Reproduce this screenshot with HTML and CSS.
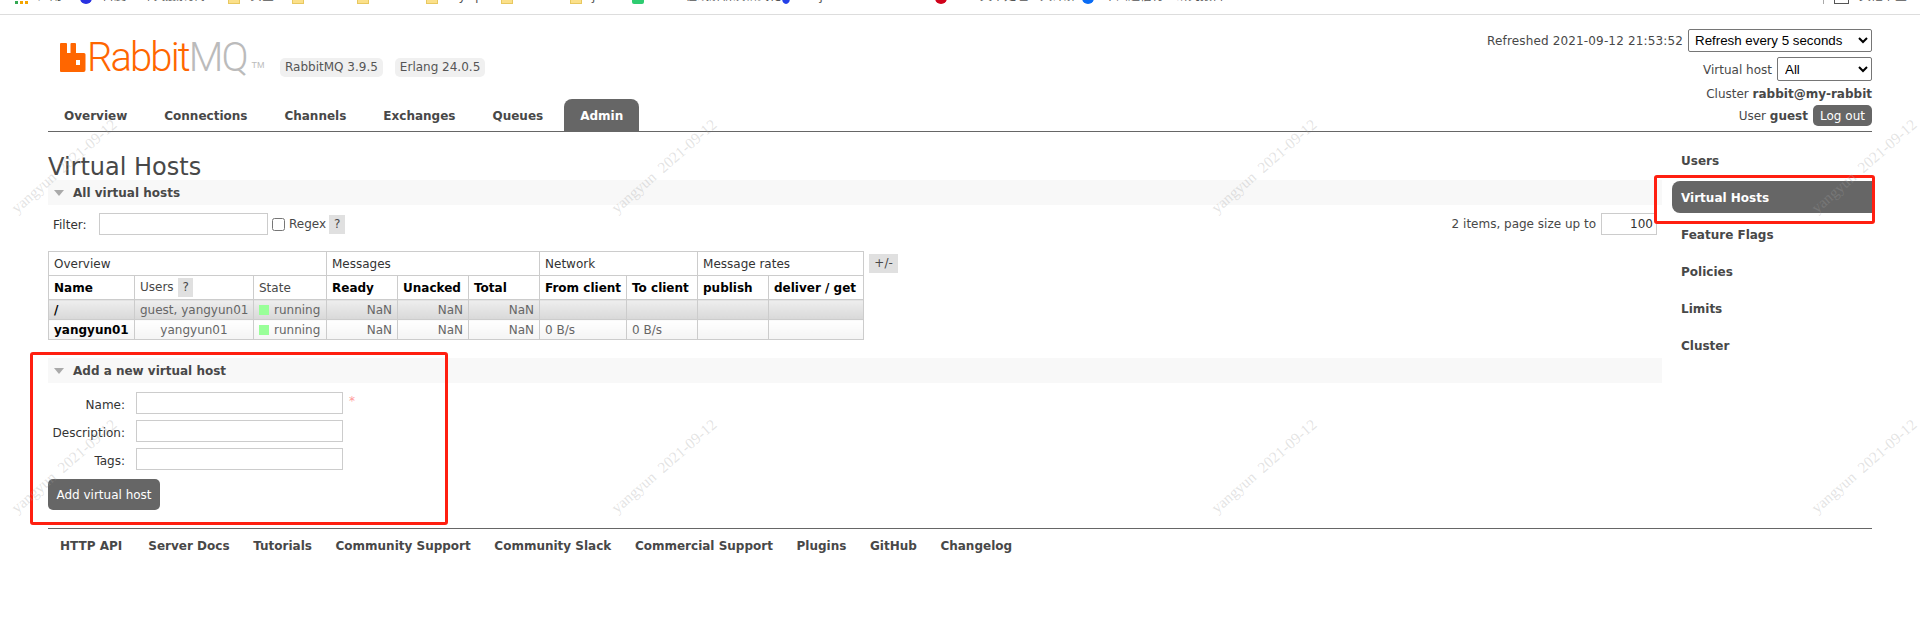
FILE: index.html
```html
<!DOCTYPE html>
<html lang="en">
<head>
    <meta charset="UTF-8">
    <title>RabbitMQ Management</title>
    <link rel="stylesheet" href="styles.css">
</head>
<body>
    <!-- browser bookmarks bar, cut off by the top of the shot -->
    <div class="bookmarks">
        <div class="bm bm-apps"><span class="ico-apps"><i></i><i></i><i></i></span><span>应用</span></div>
        <div class="bm bm-baidu"><span class="ico ico-round ico-blue"></span><span>百度</span></div>
        <div class="bm bm-zh"><span>中文搜索引擎</span></div>
        <div class="bm"><span class="ico ico-folder"></span><span>安全</span></div>
        <div class="bm"><span class="ico ico-folder"></span><span>idea</span></div>
        <div class="bm"><span class="ico ico-folder"></span><span>tools</span></div>
        <div class="bm"><span class="ico ico-folder"></span><span>mysql</span></div>
        <div class="bm"><span class="ico ico-folder"></span><span>redis</span></div>
        <div class="bm"><span class="ico ico-folder"></span><span>java</span></div>
        <div class="bm bm-wide"><span class="ico ico-green"></span><span>JSON在线解析及格式化</span></div>
        <div class="bm bm-wide"><span class="ico ico-small-blue"></span><span>Projects · Dashboard</span></div>
        <div class="bm bm-wide"><span class="ico ico-round ico-red"></span><span>awk文本处理工具详解</span></div>
        <div class="bm bm-wide"><span class="ico ico-round ico-sky"></span><span>中国通信行业研究报告</span></div>
        <div class="bm bm-other"><span class="ico-sep"></span><span class="ico-box"></span><span>其他书签</span></div>
    </div>

    <div class="header">
        <div class="header-left">
            <div class="logo-row">
                <div class="logo">
                    <svg class="logo-mark" viewBox="0 0 26 29" width="26" height="29">
                        <path fill="#f60" fill-rule="evenodd" d="M0 1q0-1 1-1h5q1 0 1 1v9h3.500V1q0-1 1-1h3.500q1 0 1 1v9h8q1.500 0 1.500 1.500V27q0 2-2 2H1q-1 0-1-1zM16 17h4v5h-4z"/>
                    </svg>
                    <span class="logo-text"><span class="logo-rabbit">Rabbit</span><span class="logo-mq">MQ</span></span>
                    <span class="logo-tm">TM</span>
                </div>
                <span class="badge badge-first">RabbitMQ 3.9.5</span>
                <span class="badge">Erlang 24.0.5</span>
            </div>
            <ul class="tabs">
                <li>Overview</li>
                <li>Connections</li>
                <li>Channels</li>
                <li>Exchanges</li>
                <li>Queues</li>
                <li class="selected">Admin</li>
            </ul>
        </div>
        <div class="header-right">
            <div class="status-row status-refresh">
                <span class="refreshed">Refreshed 2021-09-12 21:53:52</span>
                <select class="select-refresh"><option>Refresh every 5 seconds</option></select>
            </div>
            <div class="status-row status-vhost">
                <span>Virtual host</span>
                <select class="select-vhost"><option>All</option></select>
            </div>
            <div class="status-row status-cluster"><span>Cluster <b>rabbit@my-rabbit</b></span></div>
            <div class="status-row status-user">
                <span>User <b>guest</b></span>
                <button class="logout">Log out</button>
            </div>
        </div>
    </div>

    <div class="page">
        <div class="main">
            <h1>Virtual Hosts</h1>
            <h2 class="section-title"><span class="triangle"></span>All virtual hosts</h2>
            <div class="filter-row">
                <label class="filter-label">Filter:</label>
                <input type="text" class="filter-input">
                <input type="checkbox" class="regex-check">
                <span class="regex-label">Regex</span>
                <span class="help">?</span>
                <span class="pager">2 items, page size up to</span>
                <input type="text" class="page-size" value="100">
            </div>
            <div class="table-row">
                <table class="list">
                    <colgroup>
                        <col class="c86"><col class="c119"><col class="c73">
                        <col class="c71"><col class="c71"><col class="c71">
                        <col class="c87"><col class="c71"><col class="c71"><col class="c95">
                    </colgroup>
                    <thead>
                        <tr class="group-head">
                            <th colspan="3">Overview</th>
                            <th colspan="3">Messages</th>
                            <th colspan="2">Network</th>
                            <th colspan="2">Message rates</th>
                        </tr>
                        <tr class="col-head">
                            <th>Name</th>
                            <th class="plain">Users <span class="help help-small">?</span></th>
                            <th class="plain">State</th>
                            <th>Ready</th>
                            <th>Unacked</th>
                            <th>Total</th>
                            <th>From client</th>
                            <th>To client</th>
                            <th>publish</th>
                            <th>deliver / get</th>
                        </tr>
                    </thead>
                    <tbody>
                        <tr class="alt1">
                            <td class="name">/</td>
                            <td class="center">guest, yangyun01</td>
                            <td><span class="state-dot"></span>running</td>
                            <td class="num">NaN</td><td class="num">NaN</td><td class="num">NaN</td>
                            <td></td><td></td><td></td><td></td>
                        </tr>
                        <tr class="alt2">
                            <td class="name">yangyun01</td>
                            <td class="center">yangyun01</td>
                            <td><span class="state-dot"></span>running</td>
                            <td class="num">NaN</td><td class="num">NaN</td><td class="num">NaN</td>
                            <td>0 B/s</td><td>0 B/s</td><td></td><td></td>
                        </tr>
                    </tbody>
                </table>
                <span class="help help-columns">+/-</span>
            </div>

            <h2 class="section-title section-add"><span class="triangle"></span>Add a new virtual host</h2>
            <form class="add-form">
                <div class="form-row">
                    <label>Name:</label><input type="text"><span class="mand">*</span>
                </div>
                <div class="form-row">
                    <label>Description:</label><input type="text">
                </div>
                <div class="form-row">
                    <label>Tags:</label><input type="text">
                </div>
                <button type="button" class="add-btn">Add virtual host</button>
            </form>
        </div>
        <ul class="side-nav">
            <li>Users</li>
            <li class="selected">Virtual Hosts</li>
            <li>Feature Flags</li>
            <li>Policies</li>
            <li>Limits</li>
            <li>Cluster</li>
        </ul>
    </div>

    <div class="footer">
        <ul>
            <li>HTTP API</li>
            <li>Server Docs</li>
            <li>Tutorials</li>
            <li>Community Support</li>
            <li>Community Slack</li>
            <li>Commercial Support</li>
            <li>Plugins</li>
            <li>GitHub</li>
            <li>Changelog</li>
        </ul>
    </div>

    <!-- hand drawn red annotations -->
    <div class="mark mark-nav"></div>
    <div class="mark mark-form"></div>

    <!-- watermark tiles -->
    <div class="watermarks">
        <div><span>yangyun&nbsp; 2021-09-12</span></div>
        <div><span>yangyun&nbsp; 2021-09-12</span></div>
        <div><span>yangyun&nbsp; 2021-09-12</span></div>
        <div><span>yangyun&nbsp; 2021-09-12</span></div>
        <div><span>yangyun&nbsp; 2021-09-12</span></div>
        <div><span>yangyun&nbsp; 2021-09-12</span></div>
        <div><span>yangyun&nbsp; 2021-09-12</span></div>
        <div><span>yangyun&nbsp; 2021-09-12</span></div>
    </div>
</body>
</html>
```

FILE: styles.css
```css
* {
    box-sizing: border-box;
}

html, body {
    height: 631px;
    overflow: hidden;
}

body {
    margin: 0;
    position: relative;
    background-color: #fff;
    color: #484848;
    font-family: "DejaVu Sans", Verdana, sans-serif;
    font-size: 12px;
}

ul {
    list-style: none;
    margin: 0;
    padding: 0;
}

/* bookmarks bar */
.bookmarks {
    height: 15px;
    border-bottom: 1px solid #ddd;
    overflow: hidden;
    display: flex;
    align-items: flex-end;
    padding: 0 0 10px 15px;
    font-family: "Noto Sans CJK SC", sans-serif;
    font-size: 12px;
    color: #555;
}

.bm {
    flex: none;
    width: 65px;
    height: 18px;
    line-height: 18px;
    display: flex;
    align-items: flex-end;
    gap: 10px;
    white-space: nowrap;
}

.bm span {
    flex: none;
}

.bm:nth-child(4) { width: 64px; }
.bm:nth-child(6) { width: 69px; }
.bm:nth-child(7) { width: 75px; }
.bm:nth-child(8) { width: 69px; }
.bm:nth-child(9) { width: 62px; }

.bm-baidu {
    width: 63px;
}

.bm-zh {
    width: 85px;
    font-size: 11px;
}

.bm.bm-wide {
    width: 150px;
}

.bm.bm-wide:nth-child(11) {
    width: 153px;
}

.bm.bm-wide:nth-child(12) {
    width: 147px;
}

.bm-other {
    margin-left: 591px;
}

.ico {
    width: 12px;
    height: 12px;
}

.ico-round {
    border-radius: 50%;
}

.ico-blue {
    background-color: #2932e1;
}

.ico-red {
    background-color: #d0021b;
}

.ico-sky {
    background-color: #0a6cf5;
}

.ico-green {
    background-color: #2ecc71;
    border-radius: 2px;
}

.ico-small-blue {
    width: 8px;
    background-color: #2440e8;
    border-radius: 50%;
}

.ico-folder {
    background-color: #fbe08a;
    border: 1px solid #e8c860;
}

.ico-apps {
    display: flex;
    gap: 2px;
    width: 13px;
}

.ico-apps i {
    width: 3px;
    height: 3px;
    background-color: #f4a400;
}

.ico-apps i:first-child {
    background-color: #34a853;
}

.ico-sep {
    width: 1px;
    height: 12px;
    background-color: #aaa;
}

.ico-box {
    width: 15px;
    height: 12px;
    border: 1px solid #555;
}

/* header */
.header {
    height: 117px;
    margin: 0 48px;
    border-bottom: 1px solid #666;
    display: flex;
    justify-content: space-between;
}

.header-left {
    display: flex;
    flex-direction: column;
    justify-content: space-between;
    padding-top: 28px;
}

.logo-row {
    display: flex;
    align-items: flex-start;
}

.logo {
    display: flex;
    align-items: flex-start;
    width: 232px;
    padding-left: 12px;
}

.logo-mark {
    flex: none;
}

.logo-text {
    font-family: Roboto, "Liberation Sans", sans-serif;
    font-weight: 300;
    font-size: 40px;
    line-height: 29px;
    letter-spacing: -1.9px;
    margin-left: 1px;
}

.logo-rabbit {
    color: #f60;
}

.logo-mq {
    color: #bbb;
}

.logo-tm {
    font-family: "Liberation Sans", sans-serif;
    font-size: 9px;
    color: #bbb;
    margin: 17px 0 0 5px;
}

.badge {
    height: 19px;
    line-height: 19px;
    margin-top: 15px;
    margin-left: 12px;
    padding: 0 5px;
    background-color: #f0f0f0;
    border-radius: 5px;
    color: #555;
    white-space: nowrap;
}

.badge-first {
    margin-left: 0;
}

.tabs {
    display: flex;
    gap: 5px;
}

.tabs li {
    height: 32px;
    line-height: 34px;
    padding: 0 16px;
    font-weight: bold;
    color: #484848;
}

.tabs li.selected {
    background-color: #666;
    color: #fff;
    border-radius: 8px 8px 0 0;
}

.header-right {
    display: flex;
    flex-direction: column;
    align-items: flex-end;
    padding-top: 14px;
    color: #484848;
}

.status-row {
    display: flex;
    align-items: center;
    gap: 5px;
    white-space: nowrap;
}

.refreshed {
    letter-spacing: 0.15px;
}

.status-row select {
    font-family: "Liberation Sans", Arial, sans-serif;
    font-size: 13.333px;
    color: #000;
    background-color: #fff;
    border: 1px solid #767676;
    border-radius: 2px;
}

.select-refresh {
    width: 184px;
    height: 23px;
    padding-left: 2px;
}

.select-vhost {
    width: 95px;
    height: 24px;
    padding-left: 3px;
}

.status-vhost {
    margin-top: 5px;
}

.status-vhost span {
    padding-top: 2px;
}

.status-cluster {
    height: 24px;
    padding-top: 2px;
}

.logout {
    width: 59px;
    height: 21px;
    padding: 0;
    border: none;
    border-radius: 5px;
    background-color: #666;
    color: #fff;
    font: 12px "DejaVu Sans", Verdana, sans-serif;
}

/* main */
.page {
    display: flex;
    margin: 0 48px;
}

.main {
    width: 1614px;
    flex: none;
}

h1 {
    height: 29px;
    margin: 19px 0 0;
    font-size: 24px;
    line-height: 33px;
    font-weight: normal;
    color: #484848;
}

.section-title {
    height: 25px;
    line-height: 26px;
    margin: 0;
    padding-left: 25px;
    position: relative;
    background-color: #f8f8f8;
    font-size: 12px;
    font-weight: bold;
    color: #484848;
}

.triangle {
    position: absolute;
    left: 6px;
    top: 10px;
    border-style: solid;
    border-width: 6px 5.500px 0;
    border-color: #aaa transparent transparent;
}

.section-add {
    margin-top: 18px;
}

.filter-row {
    display: flex;
    align-items: center;
    height: 22px;
    margin-top: 8px;
}

.filter-label {
    width: 51px;
    padding: 2px 0 0 5px;
    color: #333;
}

input[type="text"] {
    border: 1px solid #ccc;
    background-color: #fff;
    height: 22px;
    outline: none;
}

.filter-input {
    width: 169px;
}

.regex-check {
    width: 13px;
    height: 13px;
    margin: 0 4px 0 4px;
}

.regex-label {
    width: 40px;
}

.help {
    display: inline-block;
    padding: 0 5px;
    height: 19px;
    line-height: 19px;
    background-color: #e0e0e0;
    color: #484848;
}

.list .help-small {
    margin-left: 1px;
    padding: 0 4px;
}

.pager {
    margin-left: auto;
    margin-right: 5px;
}

.page-size {
    width: 56px;
    margin-right: 5px;
    padding: 0 3px;
    text-align: right;
    font: 12px "DejaVu Sans", Verdana, sans-serif;
    color: #333;
}

/* table */
.table-row {
    display: flex;
    align-items: flex-start;
    margin-top: 16px;
}

.list {
    table-layout: fixed;
    width: 816px;
    border-collapse: collapse;
    color: #666;
}

.c71 { width: 71px; }
.c73 { width: 73px; }
.c86 { width: 86px; }
.c87 { width: 87px; }
.c95 { width: 95px; }
.c119 { width: 119px; }

.list th, .list td {
    border: 1px solid #ccc;
    padding: 0 5px;
    white-space: nowrap;
    text-align: left;
}

.group-head th {
    height: 24px;
    font-weight: normal;
    color: #333;
}

.col-head th {
    height: 24px;
    font-weight: bold;
    color: #000;
}

.col-head th.plain {
    font-weight: normal;
    color: #484848;
}

.list td {
    height: 20px;
}

.alt1 td {
    background: linear-gradient(#eee, #d8d8d8);
}

.alt2 td {
    background: linear-gradient(#fff, #f4f4f4);
}

.list td.name {
    font-weight: bold;
    color: #000;
}

.list td.center {
    text-align: center;
}

.list td.num {
    text-align: right;
}

.state-dot {
    display: inline-block;
    width: 10px;
    height: 10px;
    margin-right: 5px;
    vertical-align: -1px;
    background-color: #9f9;
}

.help-columns {
    margin: 3px 0 0 5px;
    width: 29px;
    padding: 0;
    text-align: center;
}

/* add form */
.add-form {
    padding-top: 9px;
}

.form-row {
    display: flex;
    height: 28px;
    align-items: flex-start;
    color: #333;
}

.form-row label {
    width: 77px;
    text-align: right;
    line-height: 26px;
}

.form-row input {
    width: 207px;
    margin-left: 11px;
}

.mand {
    margin: 2px 0 0 6px;
    color: #f99;
    font-size: 12px;
}

.add-btn {
    display: block;
    width: 112px;
    height: 31px;
    margin-top: 3px;
    padding: 0;
    border: none;
    border-radius: 5px;
    background-color: #666;
    color: #fff;
    font: 12px "DejaVu Sans", Verdana, sans-serif;
}

/* right hand menu */
.side-nav {
    width: 200px;
    margin-left: 10px;
    padding-top: 12px;
    flex: none;
}

.side-nav li {
    height: 32px;
    line-height: 34px;
    margin-bottom: 5px;
    padding-left: 9px;
    font-weight: bold;
    color: #484848;
}

.side-nav li.selected {
    background-color: #666;
    color: #fff;
    border-radius: 8px 0 0 8px;
}

/* footer */
.footer {
    position: absolute;
    left: 48px;
    right: 48px;
    top: 528px;
    border-top: 1px solid #666;
}

.footer ul {
    display: flex;
    gap: 23.6px;
    padding: 9px 12px 0;
    line-height: 16px;
    font-weight: bold;
    color: #484848;
}

.footer li:first-child {
    margin-right: 2.500px;
}

/* annotations */
.mark {
    position: absolute;
    border: 3px solid #ff1f10;
    border-radius: 3px;
}

.mark-nav {
    left: 1654px;
    top: 175px;
    width: 221px;
    height: 49px;
}

.mark-form {
    left: 30px;
    top: 352px;
    width: 418px;
    height: 173px;
}

/* watermark */
.watermarks {
    position: absolute;
    top: 0;
    right: 0;
    bottom: 0;
    left: 0;
    overflow: hidden;
    padding: 216px 0 0 19px;
    display: grid;
    grid-template-columns: 600px 600px 600px 100px;
    grid-template-rows: 300px 100px;
    pointer-events: none;
}

.watermarks div {
    height: 0;
}

.watermarks span {
    display: block;
    width: 100px;
    transform-origin: 0 100%;
    transform: translateY(-16px) rotate(-41deg);
    font-family: "Liberation Serif", serif;
    font-size: 15.500px;
    line-height: 16px;
    white-space: nowrap;
    color: rgba(160, 160, 160, 0.3);
}
```
